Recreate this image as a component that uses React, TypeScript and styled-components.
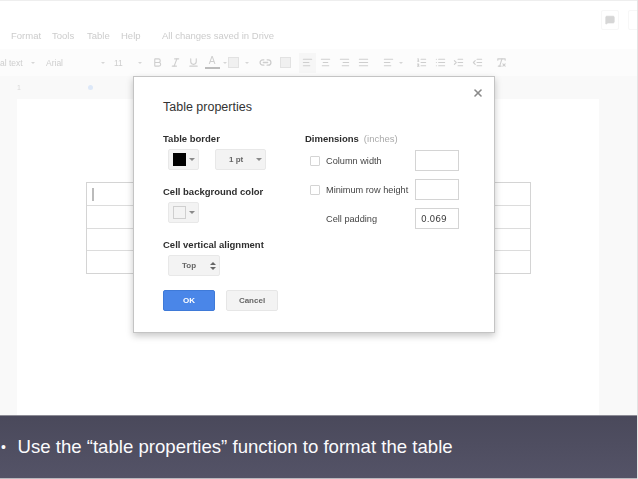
import styled, { createGlobalStyle } from "styled-components";
import {
  AlignCenter,
  AlignJustify,
  AlignLeft,
  AlignRight,
  Bold,
  IndentDecrease,
  IndentIncrease,
  Italic,
  Link2,
  List,
  ListOrdered,
  MessageSquare,
  RemoveFormatting,
  Underline,
  X,
} from "lucide-react";

const Global = createGlobalStyle`
  html, body { margin: 0; padding: 0; background: #fff; }
  body { font-family: "Liberation Sans", Arial, sans-serif; }
`;

const Page = styled.div`
  position: relative;
  width: 638px;
  height: 479px;
  overflow: hidden;
  display: flex;
  flex-direction: column;
  border-right: 1px solid #e4e4e4;
  box-sizing: border-box;
`;

const TopBar = styled.div`
  height: 21px;
  flex: none;
  box-sizing: border-box;
  border-top: 1px solid #eeeeee;
  display: flex;
  justify-content: flex-end;
  align-items: flex-start;
  padding-top: 9px;
  gap: 9px;
  color: #d6d6d6;
`;

const TopButton = styled.div<{ $clip?: boolean }>`
  width: 18px;
  height: 20px;
  flex: none;
  box-sizing: border-box;
  border: 1px solid #f7f7f7;
  border-radius: 2px;
  display: flex;
  align-items: center;
  justify-content: center;
  margin-right: ${(p) => (p.$clip ? "-9px" : "0")};
`;

const MenuBar = styled.div`
  height: 28px;
  flex: none;
  display: flex;
  align-items: center;
  padding-left: 11px;
  font-size: 9.5px;
  color: #cccccc;
  filter: blur(0.45px);
`;

const MenuItem = styled.span<{ $w: number }>`
  width: ${(p) => p.$w}px;
`;

const ToolBar = styled.div`
  height: 27px;
  flex: none;
  display: flex;
  align-items: center;
  background: #fcfcfc;
  color: #cecece;
  font-size: 8.5px;
  filter: blur(0.5px);
`;

const Tool = styled.div<{ $w: number; $on?: boolean }>`
  width: ${(p) => p.$w}px;
  height: 20px;
  flex: none;
  display: flex;
  align-items: center;
  justify-content: center;
  background: ${(p) => (p.$on ? "#f6f6f6" : "transparent")};
`;

const ToolText = styled(Tool)`
  justify-content: flex-start;
`;

const Caret = styled.div`
  width: 0;
  height: 0;
  border-left: 2px solid transparent;
  border-right: 2px solid transparent;
  border-top: 2px solid #d6d6d6;
`;

const ColorA = styled.div`
  display: flex;
  flex-direction: column;
  align-items: center;
  font-size: 10px;
  line-height: 10px;
  &::after {
    content: "";
    width: 15px;
    height: 2px;
    margin-top: 1px;
    background: #bcbcbc;
  }
`;

const Hollow = styled.div`
  width: 9px;
  height: 9px;
  background: #f0f0f0;
  border: 1px solid #e2e2e2;
`;

const Workspace = styled.div`
  flex: 1;
  min-height: 0;
  background: #f9f9f9;
  padding: 0 38px 0 17px;
  display: flex;
  flex-direction: column;
`;

const Ruler = styled.div`
  height: 23px;
  flex: none;
  display: flex;
  align-items: center;
  font-size: 7px;
  color: #d8d8d8;
  filter: blur(0.4px);
`;

const RulerDot = styled.div`
  width: 5px;
  height: 5px;
  border-radius: 50%;
  background: #dde8f8;
  margin-left: 67px;
`;

const Doc = styled.div`
  flex: 1;
  background: #fff;
  padding: 83px 0 0 69px;
`;

const DocTable = styled.div`
  width: 445px;
  box-sizing: border-box;
  border: 1px solid #d4d4d4;
`;

const DocRow = styled.div`
  height: 22.4px;
  border-top: 1px solid #dcdcdc;
  padding: 5px 0 0 5px;
  box-sizing: border-box;
  &:first-child {
    border-top: 0;
  }
`;

const TextCursor = styled.div`
  width: 1.5px;
  height: 13px;
  background: #bbbbbb;
`;

const Caption = styled.div`
  height: 64px;
  flex: none;
  box-sizing: border-box;
  border-top: 1px solid #8d8c96;
  border-bottom: 1px solid #b9b9bf;
  background: linear-gradient(180deg, #4a495b 0%, #545367 100%);
  color: #fbfbfd;
  font-size: 18.6px;
  display: flex;
  align-items: center;
`;

const Bullet = styled.span`
  width: 17.5px;
  padding-left: 1px;
  box-sizing: border-box;
  font-size: 14px;
`;

const Dialog = styled.div`
  position: absolute;
  left: 133px;
  top: 76px;
  width: 362px;
  height: 257px;
  box-sizing: border-box;
  background: #fff;
  border: 1px solid #c4c4c4;
  box-shadow: 0 3px 7px rgba(0, 0, 0, 0.22);
  padding: 22px 29px 0;
  color: #3a3a3a;
`;

const Close = styled.div`
  position: absolute;
  top: 10px;
  right: 10px;
  color: #8a8a8a;
  display: flex;
`;

const Title = styled.div`
  font-size: 12.5px;
  line-height: 16px;
  color: #333;
  margin-bottom: 18px;
`;

const Columns = styled.div`
  display: flex;
  gap: 0;
  filter: blur(0.25px);
`;

const LeftCol = styled.div`
  width: 142px;
  flex: none;
`;

const Label = styled.div`
  font-size: 9.5px;
  font-weight: bold;
  line-height: 12px;
  color: #2e2e2e;
`;

const Muted = styled.span`
  font-weight: normal;
  color: #aaa;
  margin-left: 5px;
`;

const Controls = styled.div`
  display: flex;
  gap: 16px;
  padding: 4px 0 16px 5px;
`;

const Select = styled.div<{ $w: number }>`
  width: ${(p) => p.$w}px;
  height: 21px;
  box-sizing: border-box;
  background: #f3f3f3;
  border: 1px solid #e8e8e8;
  border-radius: 2px;
  display: flex;
  align-items: center;
  justify-content: space-between;
  padding: 0 3px 0 4px;
  font-size: 8px;
  font-weight: bold;
  color: #666;
`;

const SelectText = styled.span`
  margin-left: 9px;
`;

const Swatch = styled.div<{ $color: string }>`
  width: 11px;
  height: 11px;
  background: ${(p) => p.$color};
  border: 1px solid ${(p) => (p.$color === "#000" ? "#000" : "#cfcfcf")};
`;

const DarkCaret = styled.div`
  width: 0;
  height: 0;
  border-left: 3px solid transparent;
  border-right: 3px solid transparent;
  border-top: 3px solid #8a8a8a;
`;

const Stepper = styled.div`
  display: flex;
  flex-direction: column;
  gap: 2px;
  &::before,
  &::after {
    content: "";
    border-left: 3px solid transparent;
    border-right: 3px solid transparent;
  }
  &::before {
    border-bottom: 3px solid #666;
  }
  &::after {
    border-top: 3px solid #666;
  }
`;

const Buttons = styled.div`
  display: flex;
  gap: 11px;
  margin-top: -2px;
`;

const Button = styled.div<{ $primary?: boolean }>`
  width: 52px;
  height: 21px;
  box-sizing: border-box;
  border-radius: 2px;
  display: flex;
  align-items: center;
  justify-content: center;
  font-size: 8px;
  font-weight: bold;
  background: ${(p) => (p.$primary ? "#4a86e8" : "#f3f3f3")};
  border: 1px solid ${(p) => (p.$primary ? "#3f7ad8" : "#e6e6e6")};
  color: ${(p) => (p.$primary ? "#fff" : "#666")};
`;

const RightCol = styled.div`
  flex: 1;
`;

const DimRows = styled.div`
  display: flex;
  flex-direction: column;
  gap: 8px;
  margin-top: 5px;
  padding-left: 5px;
`;

const DimRow = styled.div`
  display: flex;
  align-items: center;
  height: 21px;
  font-size: 9.2px;
  color: #444;
`;

const Check = styled.div`
  width: 10px;
  height: 10px;
  box-sizing: border-box;
  border: 1px solid #d4d4d4;
  border-radius: 1px;
  margin-right: 6px;
  flex: none;
`;

const DimLabel = styled.div<{ $indent?: boolean }>`
  width: 89px;
  flex: none;
  margin-left: ${(p) => (p.$indent ? "16px" : "0")};
`;

const DimInput = styled.div`
  width: 44px;
  height: 21px;
  box-sizing: border-box;
  border: 1px solid #d4d4d4;
  display: flex;
  align-items: center;
  padding-left: 5px;
  font-family: "DejaVu Sans", sans-serif;
  font-size: 9px;
  color: #444;
`;

const ico = { size: 11, strokeWidth: 2.4 };

export default function App() {
  return (
    <Page>
      <Global />
      <TopBar>
        <TopButton>
          <MessageSquare size={10} fill="#d6d6d6" />
        </TopButton>
        <TopButton $clip />
      </TopBar>

      <MenuBar>
        <MenuItem $w={41}>Format</MenuItem>
        <MenuItem $w={35}>Tools</MenuItem>
        <MenuItem $w={34}>Table</MenuItem>
        <MenuItem $w={41}>Help</MenuItem>
        <span>All changes saved in Drive</span>
      </MenuBar>

      <ToolBar>
        <ToolText $w={30}>al text</ToolText>
        <Tool $w={5}><Caret /></Tool>
        <Tool $w={11} />
        <ToolText $w={54}>Arial</ToolText>
        <Tool $w={5}><Caret /></Tool>
        <Tool $w={9} />
        <ToolText $w={23}>11</ToolText>
        <Tool $w={5}><Caret /></Tool>
        <Tool $w={6} />
        <Tool $w={18}><Bold {...ico} /></Tool>
        <Tool $w={18}><Italic {...ico} /></Tool>
        <Tool $w={19}><Underline {...ico} /></Tool>
        <Tool $w={18}><ColorA>A</ColorA></Tool>
        <Tool $w={7}><Caret /></Tool>
        <Tool $w={11}><Hollow /></Tool>
        <Tool $w={16}><Caret /></Tool>
        <Tool $w={20}><Link2 size={13} strokeWidth={2.4} /></Tool>
        <Tool $w={20}><Hollow /></Tool>
        <Tool $w={4} />
        <Tool $w={17} $on><AlignLeft {...ico} /></Tool>
        <Tool $w={19}><AlignCenter {...ico} /></Tool>
        <Tool $w={19}><AlignRight {...ico} /></Tool>
        <Tool $w={18}><AlignJustify {...ico} /></Tool>
        <Tool $w={6} />
        <Tool $w={20}><AlignLeft {...ico} /></Tool>
        <Tool $w={5}><Caret /></Tool>
        <Tool $w={9} />
        <Tool $w={19}><ListOrdered {...ico} /></Tool>
        <Tool $w={18}><List {...ico} /></Tool>
        <Tool $w={19}><IndentIncrease {...ico} /></Tool>
        <Tool $w={19}><IndentDecrease {...ico} /></Tool>
        <Tool $w={4} />
        <Tool $w={20}><RemoveFormatting {...ico} /></Tool>
      </ToolBar>

      <Workspace>
        <Ruler>
          <span>1</span>
          <RulerDot />
        </Ruler>
        <Doc>
          <DocTable>
            <DocRow>
              <TextCursor />
            </DocRow>
            <DocRow />
            <DocRow />
            <DocRow />
          </DocTable>
        </Doc>
      </Workspace>

      <Caption>
        <Bullet>•</Bullet>
        Use the “table properties” function to format the table
      </Caption>

      <Dialog>
        <Close>
          <X size={12} strokeWidth={3.2} />
        </Close>
        <Title>Table properties</Title>
        <Columns>
          <LeftCol>
            <Label>Table border</Label>
            <Controls>
              <Select $w={31}>
                <Swatch $color="#000" />
                <DarkCaret />
              </Select>
              <Select $w={51}>
                <SelectText>1 pt</SelectText>
                <DarkCaret />
              </Select>
            </Controls>
            <Label>Cell background color</Label>
            <Controls>
              <Select $w={31}>
                <Swatch $color="#f3f3f3" />
                <DarkCaret />
              </Select>
            </Controls>
            <Label>Cell vertical alignment</Label>
            <Controls>
              <Select $w={52}>
                <SelectText>Top</SelectText>
                <Stepper />
              </Select>
            </Controls>
            <Buttons>
              <Button $primary>OK</Button>
              <Button>Cancel</Button>
            </Buttons>
          </LeftCol>
          <RightCol>
            <Label>
              Dimensions<Muted>(inches)</Muted>
            </Label>
            <DimRows>
              <DimRow>
                <Check />
                <DimLabel>Column width</DimLabel>
                <DimInput />
              </DimRow>
              <DimRow>
                <Check />
                <DimLabel>Minimum row height</DimLabel>
                <DimInput />
              </DimRow>
              <DimRow>
                <DimLabel $indent>Cell padding</DimLabel>
                <DimInput>0.069</DimInput>
              </DimRow>
            </DimRows>
          </RightCol>
        </Columns>
      </Dialog>
    </Page>
  );
}
